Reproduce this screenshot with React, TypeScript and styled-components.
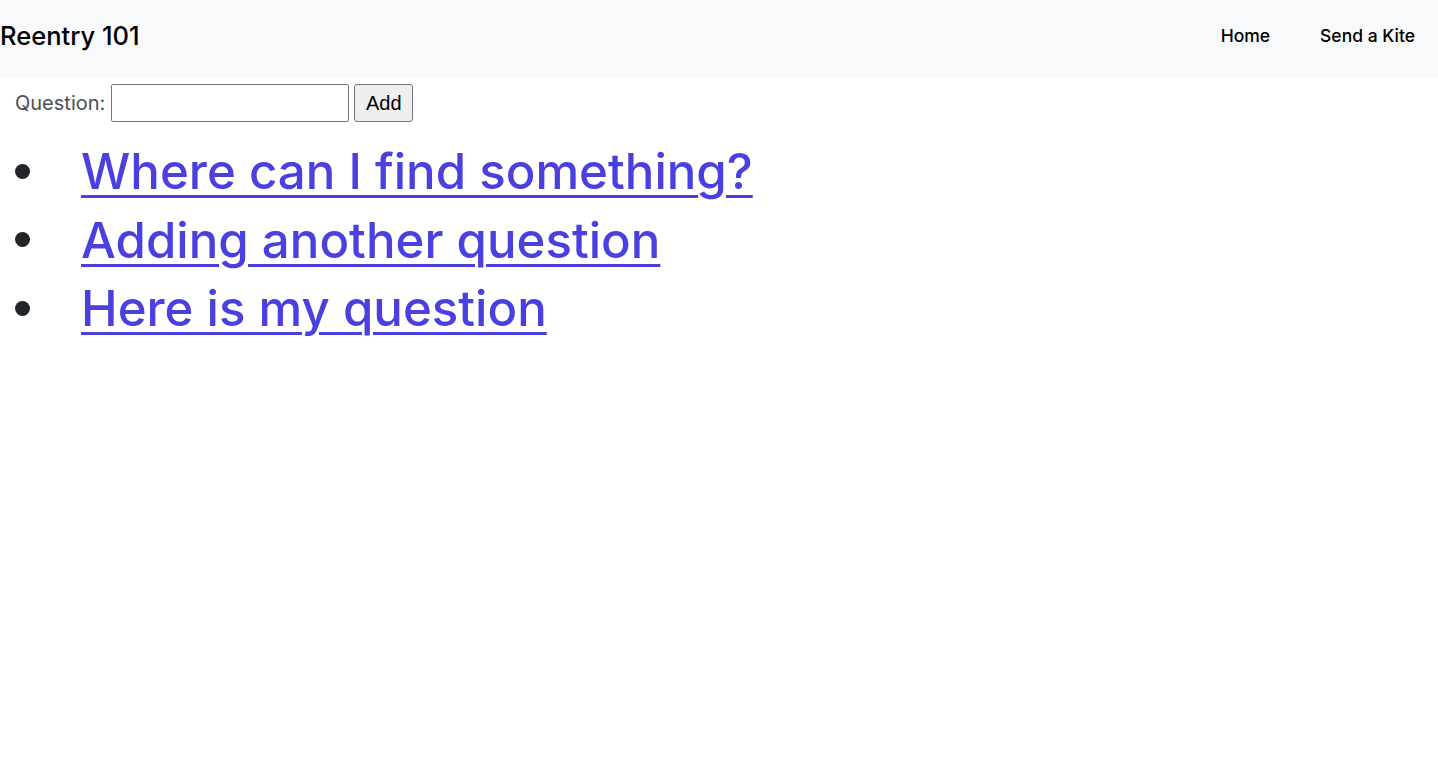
import styled, { createGlobalStyle } from 'styled-components';

const GlobalStyle = createGlobalStyle`
  body {
    margin: 0;
    font-family: Inter, 'Noto Sans', sans-serif;
    color: #212529;
    background: #ffffff;
  }
`;

const questions = [
  'Where can I find something?',
  'Adding another question',
  'Here is my question',
];

export default function App() {
  return (
    <>
      <GlobalStyle />
      <NavBar>
        <Brand>Reentry 101</Brand>
        <NavLinks>
          <NavLink href='#'>Home</NavLink>
          <NavLink href='#'>Send a Kite</NavLink>
        </NavLinks>
      </NavBar>
      <QuestionForm onSubmit={(e) => e.preventDefault()}>
        <Label htmlFor='question'>Question:</Label>
        <TextInput id='question' type='text' />
        <AddButton type='submit'>Add</AddButton>
      </QuestionForm>
      <QuestionList>
        {questions.map((q) => (
          <QuestionItem key={q}>
            <QuestionLink href='#'>{q}</QuestionLink>
          </QuestionItem>
        ))}
      </QuestionList>
    </>
  );
}

const NavBar = styled.nav`
  height: 78px;
  box-sizing: border-box;
  padding-bottom: 7px;
  background-color: #f8f9fa;
  display: flex;
  align-items: center;
  justify-content: space-between;
`;
const Brand = styled.span`
  font-size: 25.5px;
  font-weight: 500;
  color: #000;
`;
const NavLinks = styled.div`
  display: flex;
  gap: 50px;
  padding-right: 23px;
`;
const NavLink = styled.a`
  font-size: 17.5px;
  font-weight: 500;
  color: #000;
  text-decoration: none;
`;
const QuestionForm = styled.form`
  display: flex;
  align-items: center;
  gap: 5px;
  padding: 6px 15px 0;
`;
const Label = styled.label`
  font-size: 20px;
  color: #495057;
  padding-right: 1px;
`;
const TextInput = styled.input`
  width: 238px;
  height: 38px;
  box-sizing: border-box;
  border: 1px solid #767676;
  border-radius: 2px;
`;
const AddButton = styled.button`
  height: 38px;
  width: 59px;
  box-sizing: border-box;
  font-family: 'Liberation Sans', Arial, sans-serif;
  font-size: 20px;
  background: #efefef;
  border: 1px solid #767676;
  border-radius: 3px;
  color: #000;
`;
const QuestionList = styled.ul`
  margin: 15px 0 0;
  padding: 0;
  list-style: none;
  font-size: 49.2px;
  font-weight: 500;
  line-height: 68.5px;
`;
const QuestionItem = styled.li`
  display: flex;
  align-items: center;
  &::before {
    content: '';
    flex: none;
    width: 15px;
    height: 15px;
    border-radius: 50%;
    background: #212529;
    margin: 0 51px 0 15px;
  }
`;
const QuestionLink = styled.a`
  color: #4a40e0;
  text-decoration: underline;
  text-underline-offset: 6px;
  text-decoration-thickness: 3px;
`;
